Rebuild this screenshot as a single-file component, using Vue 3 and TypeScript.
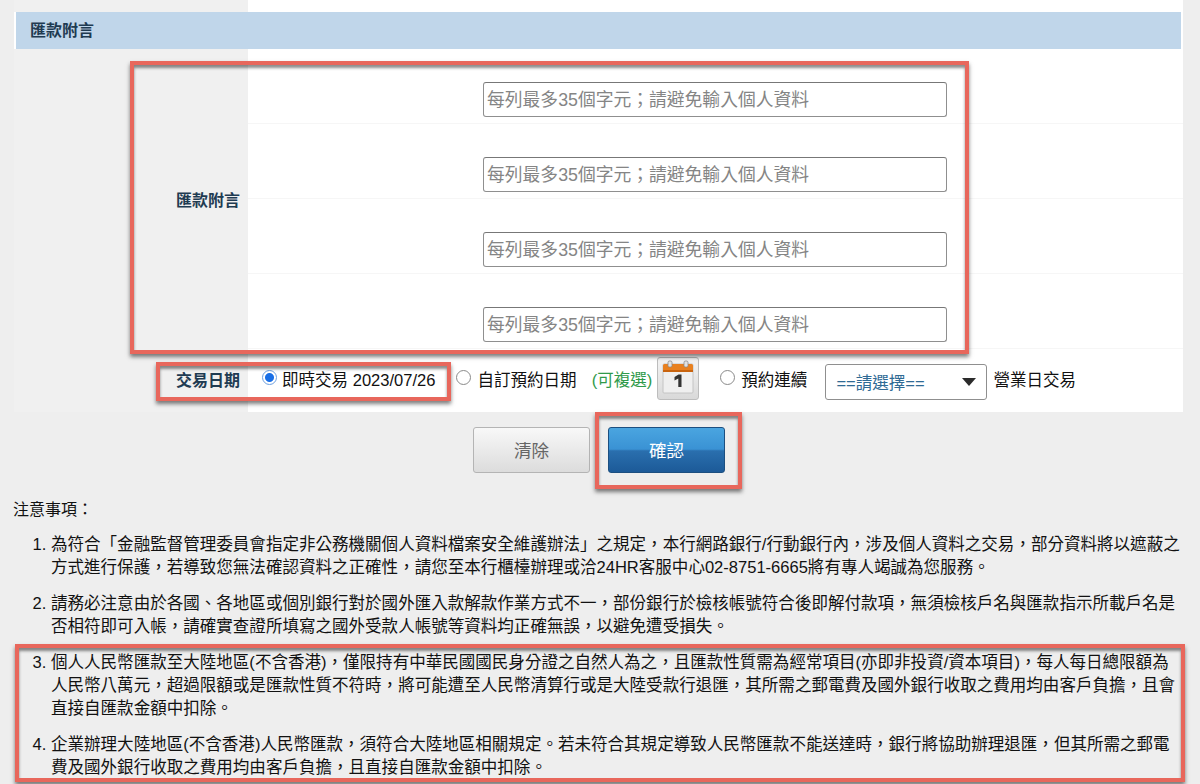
<script setup lang="ts">
const rows: number[] = [1, 2, 3, 4]

const marks = [
  { left: 130, top: 61, width: 839, height: 293 },
  { left: 156, top: 362, width: 295, height: 39 },
  { left: 595, top: 412, width: 147, height: 77 },
  { left: 15, top: 644, width: 1170, height: 138 }
]

const notes: string[] = [
  '為符合「金融監督管理委員會指定非公務機關個人資料檔案安全維護辦法」之規定，本行網路銀行/行動銀行內，涉及個人資料之交易，部分資料將以遮蔽之方式進行保護，若導致您無法確認資料之正確性，請您至本行櫃檯辦理或洽24HR客服中心02-8751-6665將有專人竭誠為您服務。',
  '請務必注意由於各國、各地區或個別銀行對於國外匯入款解款作業方式不一，部份銀行於檢核帳號符合後即解付款項，無須檢核戶名與匯款指示所載戶名是否相符即可入帳，請確實查證所填寫之國外受款人帳號等資料均正確無誤，以避免遭受損失。',
  '個人人民幣匯款至大陸地區(不含香港)，僅限持有中華民國國民身分證之自然人為之，且匯款性質需為經常項目(亦即非投資/資本項目)，每人每日總限額為人民幣八萬元，超過限額或是匯款性質不符時，將可能遭至人民幣清算行或是大陸受款行退匯，其所需之郵電費及國外銀行收取之費用均由客戶負擔，且會直接自匯款金額中扣除。',
  '企業辦理大陸地區(不含香港)人民幣匯款，須符合大陸地區相關規定。若未符合其規定導致人民幣匯款不能送達時，銀行將協助辦理退匯，但其所需之郵電費及國外銀行收取之費用均由客戶負擔，且直接自匯款金額中扣除。'
]
</script>

<template>
  <div class="page">
    <div class="panel">
      <div class="top_strip"><div class="side"></div></div>
      <div class="section_title">匯款附言</div>

      <div class="message_block">
        <div class="side side_label">匯款附言</div>
        <div class="message_rows">
          <div class="message_row" v-for="row in rows" :key="row">
            <input class="message_input" type="text" placeholder="每列最多35個字元；請避免輸入個人資料" />
          </div>
        </div>
      </div>

      <div class="date_block">
        <div class="side side_label date_label">交易日期</div>
        <div class="date_options">
          <label class="option option_now">
            <input type="radio" name="date_type" checked />
            <span>即時交易 2023/07/26</span>
          </label>
          <label class="option option_custom">
            <input type="radio" name="date_type" />
            <span>自訂預約日期</span>
          </label>
          <span class="multi_hint">(可複選)</span>
          <button class="calendar_button" type="button" aria-label="選擇日期">
            <svg width="32" height="34" viewBox="0 0 32 34">
              <rect x="1" y="4" width="30" height="29" rx="1" fill="#efefef" stroke="#c4c4c4" />
              <path d="M1 12V5.500A1.500 1.500 0 0 1 2.500 4H29.500A1.500 1.500 0 0 1 31 5.500V12Z" fill="#e8801f" />
              <rect x="1" y="10" width="30" height="2" fill="#c9640f" />
              <rect x="6" y="1" width="4" height="6" rx="1.500" fill="#e2e2e2" stroke="#8a8a8a" stroke-width=".8" />
              <rect x="22" y="1" width="4" height="6" rx="1.500" fill="#e2e2e2" stroke="#8a8a8a" stroke-width=".8" />
              <path d="M12.500 17 16.500 14.500H19.500V27H16.300V18.500L12.500 20.500Z" fill="#333" />
            </svg>
          </button>
          <label class="option option_repeat">
            <input type="radio" name="date_type" />
            <span>預約連續</span>
          </label>
          <div class="fake_select">
            <span>==請選擇==</span>
            <i class="select_arrow"></i>
          </div>
          <span class="select_after">營業日交易</span>
        </div>
      </div>
    </div>

    <div class="actions">
      <button class="action_button action_clear" type="button">清除</button>
      <button class="action_button action_confirm" type="button">確認</button>
    </div>

    <div class="notes">
      <div class="notes_title">注意事項：</div>
      <ol class="notes_list">
        <li v-for="note in notes" :key="note">{{ note }}</li>
      </ol>
    </div>

    <!-- red annotation boxes drawn over the page -->
    <div class="mark" v-for="mark in marks" :key="mark.left" :style="{
      left: mark.left + 'px',
      top: mark.top + 'px',
      width: mark.width + 'px',
      height: mark.height + 'px'
    }"></div>
  </div>
</template>

<style>
html, body {
  margin: 0;
  background: #eeeeee;
}
</style>

<style scoped>
.page {
  position: relative;
  width: 1200px;
  height: 784px;
  overflow: hidden;
  background: #eeeeee;
  color: #111111;
  font-family: "Liberation Sans", "Noto Sans CJK TC", sans-serif;
  font-size: 16.55px;
}

.panel {
  width: 1169px;
  margin-left: 14px;
  background: #ffffff;
}

.top_strip {
  height: 12px;
}

.side {
  width: 234px;
  height: 100%;
  flex: none;
  background: #f0f0f0;
}

.section_title {
  height: 37px;
  margin: 0 2px;
  padding-left: 14px;
  line-height: 37px;
  background: #c0d6ea;
  color: #1f3b52;
  font-weight: 700;
  font-size: 16px;
}

.message_block {
  display: flex;
  height: 300px;
}

.side_label {
  display: flex;
  align-items: center;
  justify-content: flex-end;
  box-sizing: border-box;
  height: auto;
  padding-right: 8px;
  color: #1f3b52;
  font-weight: 700;
  font-size: 16px;
}

.date_label {
  padding-bottom: 4px;
}

.message_rows {
  flex: 1;
}

.message_row {
  display: flex;
  align-items: flex-end;
  box-sizing: border-box;
  height: 75px;
  padding: 0 0 6px 235px;
  border-bottom: 1px solid #f6f6f6;
}

.message_input {
  box-sizing: border-box;
  width: 464px;
  height: 35px;
  padding: 1px 3px 0;
  border: 1px solid #8f8f8f;
  border-top-color: #777777;
  border-radius: 3px;
  background: #ffffff;
  font: inherit;
  font-size: 17.8px;
}

.message_input::placeholder {
  color: #858585;
  opacity: 1;
}

.date_block {
  display: flex;
  height: 63px;
}

.date_options {
  display: flex;
  align-items: center;
  flex: 1;
  padding: 0 0 3px 14px;
}

.option {
  display: flex;
  align-items: center;
  gap: 6px;
}

.option input {
  appearance: none;
  box-sizing: border-box;
  width: 15px;
  height: 15px;
  margin: 0 0 3px;
  border: 1px solid #8a8a8a;
  border-radius: 50%;
  background: #ffffff;
}

.option input:checked {
  border-color: #6d9fe0;
  background: radial-gradient(circle, #1a6fe6 0 4px, #ffffff 5px);
}

.option_now {
  gap: 5px;
}

.option_custom {
  margin-left: 21px;
}

.multi_hint {
  margin-left: 15px;
  color: #2f9a4a;
}

.calendar_button {
  display: flex;
  align-items: center;
  justify-content: center;
  box-sizing: border-box;
  width: 42px;
  height: 43px;
  margin: 0 0 1px 5px;
  padding: 0 0 3px;
  border: 1px solid #bdbdbd;
  border-radius: 3px;
  background: linear-gradient(#f4f4f4, #d9d9d9);
}

.option_repeat {
  margin-left: 21px;
}

.fake_select {
  display: flex;
  align-items: center;
  justify-content: space-between;
  box-sizing: border-box;
  width: 162px;
  height: 36px;
  margin: 6px 0 0 18px;
  padding: 0 10px;
  border: 1px solid #8f8f8f;
  border-radius: 3px;
  color: #2f6a94;
}

.select_arrow {
  width: 0;
  height: 0;
  border-left: 7px solid transparent;
  border-right: 7px solid transparent;
  border-top: 8px solid #2b2b2b;
}

.select_after {
  margin-left: 6px;
}

.actions {
  display: flex;
  justify-content: center;
  gap: 18px;
  padding: 15px 2px 0 0;
}

.action_button {
  box-sizing: border-box;
  width: 117px;
  height: 46px;
  padding: 0 0 2px;
  border-radius: 3px;
  font: inherit;
  font-size: 17.5px;
}

.action_clear {
  border: 1px solid #b4b4b4;
  background: linear-gradient(#f8f8f8, #dcdcdc);
  color: #666666;
}

.action_confirm {
  border: 1px solid #1c4f80;
  background: linear-gradient(#4aa5e0 0%, #3a92d4 48%, #2a6fae 52%, #1c5a98 100%);
  color: #ffffff;
}

.notes {
  padding-top: 25px;
}

.notes_title {
  margin-left: 13px;
  font-size: 16px;
  line-height: 23px;
}

.notes_list {
  width: 1133px;
  margin: 12px 0 0 14px;
  padding-left: 37px;
  line-height: 23.2px;
}

.notes_list li {
  margin-bottom: 12.6px;
}

.mark {
  position: absolute;
  box-sizing: border-box;
  border: 4px solid #e8675c;
  box-shadow: 0 3px 4px rgba(0, 0, 0, 0.5), inset 0 3px 3px rgba(0, 0, 0, 0.45);
  pointer-events: none;
}
</style>
